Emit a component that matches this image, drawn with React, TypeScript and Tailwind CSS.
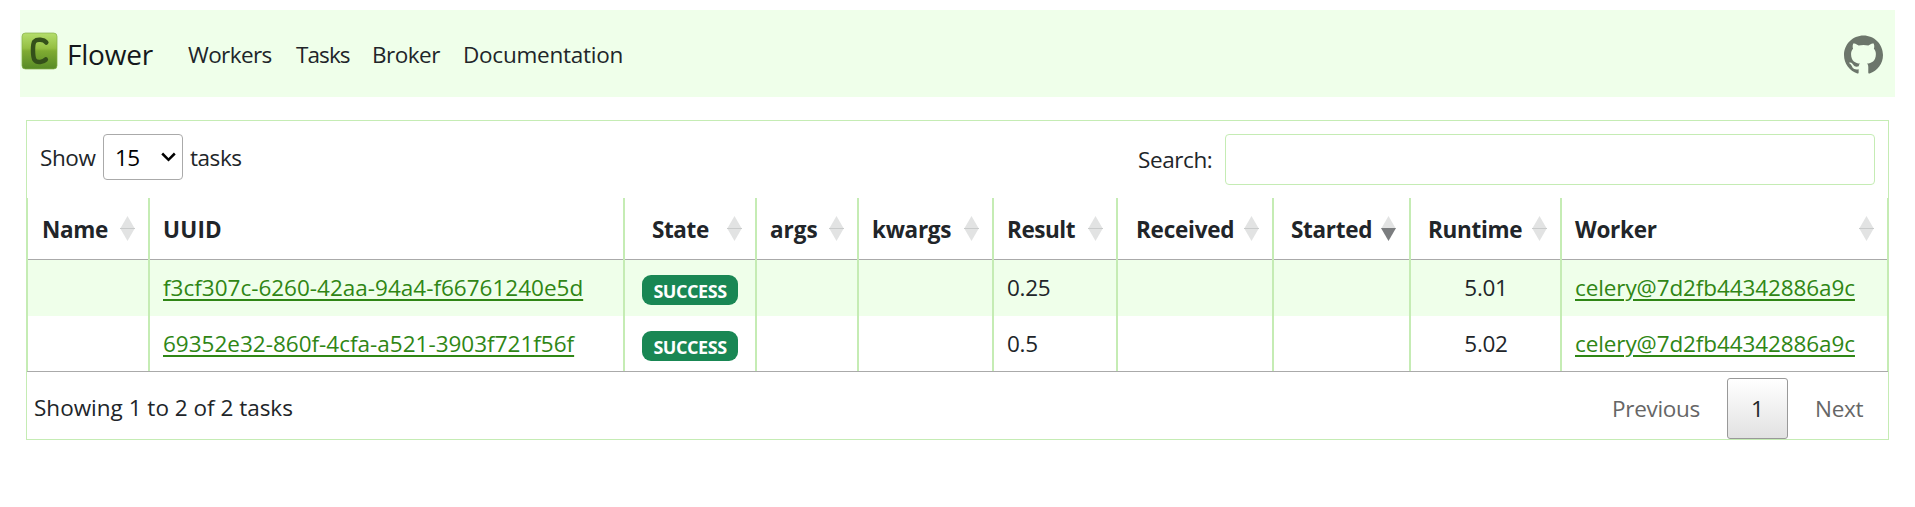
import { SiGithub } from 'react-icons/si';

const GRID = 'grid grid-cols-[121px_475px_132px_102px_135px_124px_156px_137px_151px_328px]';
const CELL = 'flex border-l-2 border-[#c5ecb4] first:border-l last:border-r';

type Column = { label: string; className: string; sort: 'none' | 'both' | 'desc' };

const columns: Column[] = [
  { label: 'Name', className: 'pl-[14px] tracking-[-0.3px]', sort: 'both' },
  { label: 'UUID', className: 'pl-[13px] tracking-[0.2px]', sort: 'none' },
  { label: 'State', className: 'pl-[27px] tracking-[-0.4px]', sort: 'both' },
  { label: 'args', className: 'pl-[13px]', sort: 'both' },
  { label: 'kwargs', className: 'pl-[13px] tracking-[-0.3px]', sort: 'both' },
  { label: 'Result', className: 'pl-[13px] tracking-[-0.45px]', sort: 'both' },
  { label: 'Received', className: 'pl-[18px] tracking-[-0.25px]', sort: 'both' },
  { label: 'Started', className: 'pl-[17px] tracking-[-0.3px]', sort: 'desc' },
  { label: 'Runtime', className: 'pl-[17px] tracking-[-0.3px]', sort: 'both' },
  { label: 'Worker', className: 'pl-[13px] tracking-[-0.3px]', sort: 'both' },
];

const tasks = [
  { uuid: 'f3cf307c-6260-42aa-94a4-f66761240e5d', result: '0.25', runtime: '5.01', worker: 'celery@7d2fb44342886a9c' },
  { uuid: '69352e32-860f-4cfa-a521-3903f721f56f', result: '0.5', runtime: '5.02', worker: 'celery@7d2fb44342886a9c' },
];

function SortIcon({ desc }: { desc: boolean }) {
  return (
    <svg className="mb-[2px] h-[25px] w-[15px] shrink-0" viewBox="0 0 15 25">
      <path d="M7.5 0 15 13H0Z" fill="#e2e3e3" />
      <path d="M0 12H15L7.5 25Z" fill={desc ? '#7b7d7f' : '#e2e3e3'} />
      {!desc && <path d="M0 12.5H15" stroke="#c9cbcb" />}
    </svg>
  );
}

function Logo() {
  return (
    <svg className="ml-px h-[38px] w-[37px]" viewBox="0 0 38 38" preserveAspectRatio="none">
      <defs>
        <linearGradient id="logo" x1="0" y1="0" x2="0" y2="1">
          <stop offset="0" stopColor="#b4de6c" />
          <stop offset="0.42" stopColor="#94bf42" />
          <stop offset="0.5" stopColor="#7fab32" />
          <stop offset="1" stopColor="#578a26" />
        </linearGradient>
      </defs>
      <rect x="1" y="1" width="36" height="36" rx="3.5" fill="url(#logo)" stroke="#86b04a" strokeOpacity="0.7" />
      <path
        d="M26 10.5C23.5 7.5 16.5 6.7 13.8 9.5 11.8 12 11.8 25 14 28 16.5 31.3 23 30 25.5 27.5"
        fill="none"
        stroke="#34501a"
        strokeWidth="4.6"
        strokeLinecap="round"
      />
    </svg>
  );
}

export default function App() {
  return (
    <div className="h-[507px] bg-white pt-[10px] pr-5 pl-5 font-['Open_Sans','Noto_Sans',sans-serif] text-[22.5px] leading-[36px] text-[#212529]">
      <nav className="flex h-[87px] items-center bg-[#efffea] pr-3">
        <div className="pb-[6px]">
          <Logo />
        </div>
        <span className="ml-[9px] w-[118px] text-[28px] tracking-[-0.2px] text-[#14181b]">Flower</span>
        <div className="flex flex-1 pt-[2px]">
          <span className="ml-[3px] w-[108px] tracking-[-0.6px]">Workers</span>
          <span className="w-[76px] tracking-[-0.9px]">Tasks</span>
          <span className="w-[91px] tracking-[-0.5px]">Broker</span>
          <span className="tracking-[-0.25px]">Documentation</span>
        </div>
        <SiGithub className="mt-px size-[39px] text-[#6c766b]" />
      </nav>

      <main className="mx-[6px] mt-[23px] h-[320px] w-[1863px] border border-[#c5ecb4]">
        <div className="flex h-[77px] items-start justify-between pt-[13px] pr-[13px] pl-[13px]">
          <div className="flex h-[46px] items-center">
            <span className="w-[63px] pt-px tracking-[-0.4px]">Show</span>
            <div className="flex h-[46px] w-[80px] items-center justify-between rounded-[4px] border border-[#aaa] pt-[2px] pr-[6px] pl-[11px] text-black">
              <span className="tracking-[-0.5px]">15</span>
              <svg className="mb-[3px] h-[10px] w-[15px]" viewBox="0 0 15 10" fill="none" stroke="currentColor" strokeWidth="2.5">
                <path d="M1.2 1.5 7.5 7.8 13.8 1.5" />
              </svg>
            </div>
            <span className="ml-[7px] pt-px tracking-[-0.45px]">tasks</span>
          </div>
          <label className="flex items-center">
            <span className="w-[87px] tracking-[-0.4px]">Search:</span>
            <input className="h-[51px] w-[650px] rounded-[4px] border border-[#c5ecb4] bg-transparent px-2 outline-none" />
          </label>
        </div>

        <div className="border-b border-[#aaaaaa]">
          <div className={GRID + ' h-[62px] bg-[linear-gradient(#aaa,#aaa)] bg-[length:100%_1px] bg-bottom bg-no-repeat font-bold'}>
            {columns.map((c) => (
              <div key={c.label} className={CELL + ' items-center justify-between pr-[13px] ' + c.className}>
                <span className="pt-[2px]">{c.label}</span>
                {c.sort !== 'none' && <SortIcon desc={c.sort === 'desc'} />}
              </div>
            ))}
          </div>
          {tasks.map((t) => (
            <div key={t.uuid} className={GRID + ' h-[56px] odd:bg-white even:bg-[#efffea] last:h-[55px]'}>
              <div className={CELL} />
              <div className={CELL + ' pt-[10px] pl-[13px]'}>
                <a className="text-[#2f8615] underline decoration-2 underline-offset-[3px]">{t.uuid}</a>
              </div>
              <div className={CELL + ' pt-[15px] pl-[17px]'}>
                <span className="flex h-[30px] w-[96px] items-center justify-center rounded-[9px] bg-[#198754] pt-px text-[18px] font-bold tracking-[-0.45px] text-white">
                  SUCCESS
                </span>
              </div>
              <div className={CELL} />
              <div className={CELL} />
              <div className={CELL + ' pt-[10px] pl-[13px] tracking-[-0.3px]'}>{t.result}</div>
              <div className={CELL} />
              <div className={CELL} />
              <div className={CELL + ' justify-center pt-[10px] pl-px tracking-[-0.3px]'}>{t.runtime}</div>
              <div className={CELL + ' pt-[10px] pl-[13px]'}>
                <a className="tracking-[-0.1px] text-[#2f8615] underline decoration-2 underline-offset-[3px]">{t.worker}</a>
              </div>
            </div>
          ))}
        </div>

        <div className="flex items-start justify-between pt-[6px] pl-[7px]">
          <span className="pt-[12px]">Showing 1 to 2 of 2 tasks</span>
          <div className="flex h-[61px] items-center text-[#666]">
            <span className="w-[115px] pt-px tracking-[-0.3px]">Previous</span>
            <span className="flex h-[61px] w-[61px] items-center justify-center rounded-[3px] border border-[#999] bg-linear-to-b from-white to-[#e2e2e2] pt-px text-[#212529]">
              1
            </span>
            <span className="ml-[27px] w-[73px] pt-px tracking-[-0.3px]">Next</span>
          </div>
        </div>
      </main>
    </div>
  );
}
